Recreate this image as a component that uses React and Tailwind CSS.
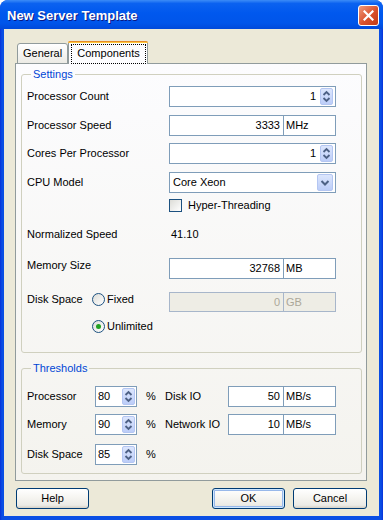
import React from 'react';

function SpinButton() {
  return (
    <span className="flex h-[17px] w-[13px] items-center justify-center rounded-[2px] border border-[#B4C6F2] bg-[linear-gradient(to_bottom,#DCE6FD,#BCCDF8)]">
      <svg width="9" height="13" viewBox="0 0 9 13">
        <path d="M1.5 5 L4.5 2 L7.5 5" fill="none" stroke="#4D6185" strokeWidth="1.8" />
        <path d="M1.5 8 L4.5 11 L7.5 8" fill="none" stroke="#4D6185" strokeWidth="1.8" />
      </svg>
    </span>
  );
}

function SpinBox({ value }) {
  return (
    <div className="flex h-full w-[167px] items-center justify-end border border-[#7F9DB9] bg-white pr-[2px]">
      <span className="mr-[4px]">{value}</span>
      <SpinButton />
    </div>
  );
}

function SmallSpin({ value }) {
  return (
    <div className="flex h-full w-[42px] items-center justify-between border border-[#7F9DB9] bg-white pl-[2px] pr-[1px]">
      <span>{value}</span>
      <SpinButton />
    </div>
  );
}

function UnitBox({ value, unit, disabled, left = 'w-[114px]', width = 'w-[167px]' }) {
  const tone = disabled
    ? 'border-[#A7B6CA] bg-[#EEEDE5] text-[#ACA899]'
    : 'border-[#7F9DB9] bg-white text-black';
  const divider = disabled ? 'border-[#A7B6CA]' : 'border-[#7F9DB9]';
  return (
    <div className={`flex h-full border ${width} ${tone}`}>
      <div className={`flex items-center justify-end border-r pr-[3px] ${left} ${divider}`}>{value}</div>
      <div className="flex items-center pl-[2px]">{unit}</div>
    </div>
  );
}

function Combo({ value }) {
  return (
    <div className="flex h-full w-[167px] items-center justify-between border border-[#7F9DB9] bg-white pl-[3px] pr-[2px]">
      <span>{value}</span>
      <span className="flex h-[17px] w-[16px] items-center justify-center rounded-[2px] border border-[#B4C6F2] bg-[linear-gradient(to_bottom,#DCE6FD,#BCCDF8)]">
        <svg width="10" height="8" viewBox="0 0 10 8">
          <path d="M1.5 2 L5 5.5 L8.5 2" fill="none" stroke="#4D6185" strokeWidth="2" />
        </svg>
      </span>
    </div>
  );
}

function Radio({ checked }) {
  return (
    <span className="flex h-[13px] w-[13px] items-center justify-center rounded-full border border-[#1C5180] bg-[linear-gradient(135deg,#DCDCD7,#FFFFFF)]">
      {checked && <span className="h-[5px] w-[5px] rounded-full bg-[#21A121]" />}
    </span>
  );
}

function XPButton({ children, isDefault, className }) {
  return (
    <button
      type="button"
      className={`h-[21px] rounded-[3px] border border-[#003C74] bg-[linear-gradient(to_bottom,#FFFFFF_0%,#F6F5F1_45%,#ECEBE6_85%,#D6D0C5_100%)] text-[11px] text-black ${isDefault ? 'shadow-[inset_0_0_0_1px_#CEE7FF,inset_0_0_0_2px_#98B8EA]' : ''} ${className}`}
    >
      {children}
    </button>
  );
}

export default function App() {
  return (
    <div className="h-[520px] w-[383px] bg-white font-['Liberation_Sans',Arial,sans-serif] text-[11px] text-black">
      <div className="flex h-full flex-col overflow-hidden rounded-t-[8px] bg-[linear-gradient(to_right,#0831D9,#0A4EE4_2px,#0A4EE4_calc(100%-2px),#0831D9)]">
        {/* title bar */}
        <div className="flex h-[29px] items-center bg-[linear-gradient(to_bottom,#3C8CF7_0%,#0B62F0_12%,#0058EE_45%,#0055EA_80%,#0049DA_100%)] pt-[2px]">
          <span className="pl-[7px] text-[13px] font-bold text-white [text-shadow:1px_1px_0_#0A1883]">New Server Template</span>
          <span className="ml-auto mr-[4px] flex h-[21px] w-[21px] items-center justify-center rounded-[3px] border border-white bg-[linear-gradient(135deg,#F09A7C,#D9512C_55%,#C23A16)]">
            <svg width="11" height="11" viewBox="0 0 11 11">
              <path d="M1.5 1.5 L9.5 9.5 M9.5 1.5 L1.5 9.5" stroke="#FFFFFF" strokeWidth="2.2" strokeLinecap="square" />
            </svg>
          </span>
        </div>

        {/* body */}
        <div className="mx-[4px] mb-[4px] flex flex-1 flex-col bg-[#ECE9D8] pl-[11px] pr-[12px] pt-[12px]">
          {/* tabs */}
          <div className="relative z-10 -mb-[1px] flex h-[23px] items-end pl-[2px]">
            <div className="flex h-[21px] w-[51px] items-center rounded-t-[3px] border border-[#919B9C] bg-[linear-gradient(to_bottom,#FFFFFF,#ECEBE5)] pl-[5px]">
              General
            </div>
            <div className="flex h-[23px] w-[80px] flex-col">
              <div className="h-[3px] rounded-t-[3px] border-t border-[#E68B2C] bg-[#FFC83C]" />
              <div className="flex flex-1 border-x border-[#919B9C] bg-[#FCFCFE] pl-[2px] pr-[1px] pt-[1px]">
                <div className="flex flex-1 items-center justify-center border border-dotted border-black pb-[2px]">
                  Components
                </div>
              </div>
            </div>
          </div>

          {/* tab panel */}
          <div className="flex flex-col border border-[#919B9C] bg-[linear-gradient(to_bottom,#FCFCFE,#F4F3EE)] pb-[6px] pl-[5px] pr-[4px]">
            <fieldset className="mt-[4px] rounded-[3px] border border-[#D0D0BF] pb-[19px] pl-[5px]">
              <legend className="ml-[4px] px-[2px] leading-[13px] text-[#0046D5]">Settings</legend>
              <div className="flex flex-col pt-[5px]">
                <div className="flex h-[21px] items-center">
                  <span className="w-[142px]">Processor Count</span>
                  <SpinBox value="1" />
                </div>
                <div className="mt-[8px] flex h-[21px] items-center">
                  <span className="w-[142px]">Processor Speed</span>
                  <UnitBox value="3333" unit="MHz" />
                </div>
                <div className="mt-[7px] flex h-[21px] items-center">
                  <span className="w-[142px]">Cores Per Processor</span>
                  <SpinBox value="1" />
                </div>
                <div className="mt-[8px] flex h-[21px] items-center">
                  <span className="w-[142px]">CPU Model</span>
                  <Combo value="Core Xeon" />
                </div>
                <div className="mt-[6px] flex h-[13px] items-center pl-[142px]">
                  <span className="h-[13px] w-[13px] border border-[#1C5180] bg-[linear-gradient(135deg,#DCDCD7,#FFFFFF)]" />
                  <span className="ml-[6px]">Hyper-Threading</span>
                </div>
                <div className="mt-[12px] flex h-[21px] items-center">
                  <span className="w-[142px]">Normalized Speed</span>
                  <span className="pl-[2px]">41.10</span>
                </div>
                <div className="mt-[13px] flex h-[21px] items-center">
                  <span className="mb-[6px] w-[142px]">Memory Size</span>
                  <UnitBox value="32768" unit="MB" />
                </div>
                <div className="mt-[13px] flex h-[20px] items-center">
                  <span className="mb-[6px] w-[65px]">Disk Space</span>
                  <div className="mb-[6px] flex w-[77px] items-center gap-[2px]">
                    <Radio />
                    <span>Fixed</span>
                  </div>
                  <UnitBox value="0" unit="GB" disabled />
                </div>
                <div className="mt-[8px] flex h-[13px] items-center gap-[2px] pl-[65px]">
                  <Radio checked />
                  <span>Unlimited</span>
                </div>
              </div>
            </fieldset>

            <fieldset className="mt-[9px] rounded-[3px] border border-[#D0D0BF] pb-[8px] pl-[5px]">
              <legend className="ml-[4px] px-[2px] leading-[13px] text-[#0046D5]">Thresholds</legend>
              <div className="flex flex-col pt-[11px]">
                <div className="flex h-[21px] items-center">
                  <span className="w-[68px]">Processor</span>
                  <SmallSpin value="80" />
                  <span className="ml-[9px] w-[19px]">%</span>
                  <span className="w-[63px]">Disk IO</span>
                  <UnitBox value="50" unit="MB/s" left="w-[55px]" width="w-[108px]" />
                </div>
                <div className="mt-[7px] flex h-[21px] items-center">
                  <span className="w-[68px]">Memory</span>
                  <SmallSpin value="90" />
                  <span className="ml-[9px] w-[19px]">%</span>
                  <span className="w-[63px]">Network IO</span>
                  <UnitBox value="10" unit="MB/s" left="w-[55px]" width="w-[108px]" />
                </div>
                <div className="mt-[9px] flex h-[21px] items-center">
                  <span className="w-[68px]">Disk Space</span>
                  <SmallSpin value="85" />
                  <span className="ml-[9px] w-[19px]">%</span>
                </div>
              </div>
            </fieldset>
          </div>

          {/* buttons */}
          <div className="mt-[7px] flex items-center pl-[1px]">
            <XPButton className="w-[73px]">Help</XPButton>
            <XPButton isDefault className="ml-auto w-[73px]">OK</XPButton>
            <XPButton className="ml-[8px] w-[74px]">Cancel</XPButton>
          </div>
        </div>
      </div>
    </div>
  );
}
